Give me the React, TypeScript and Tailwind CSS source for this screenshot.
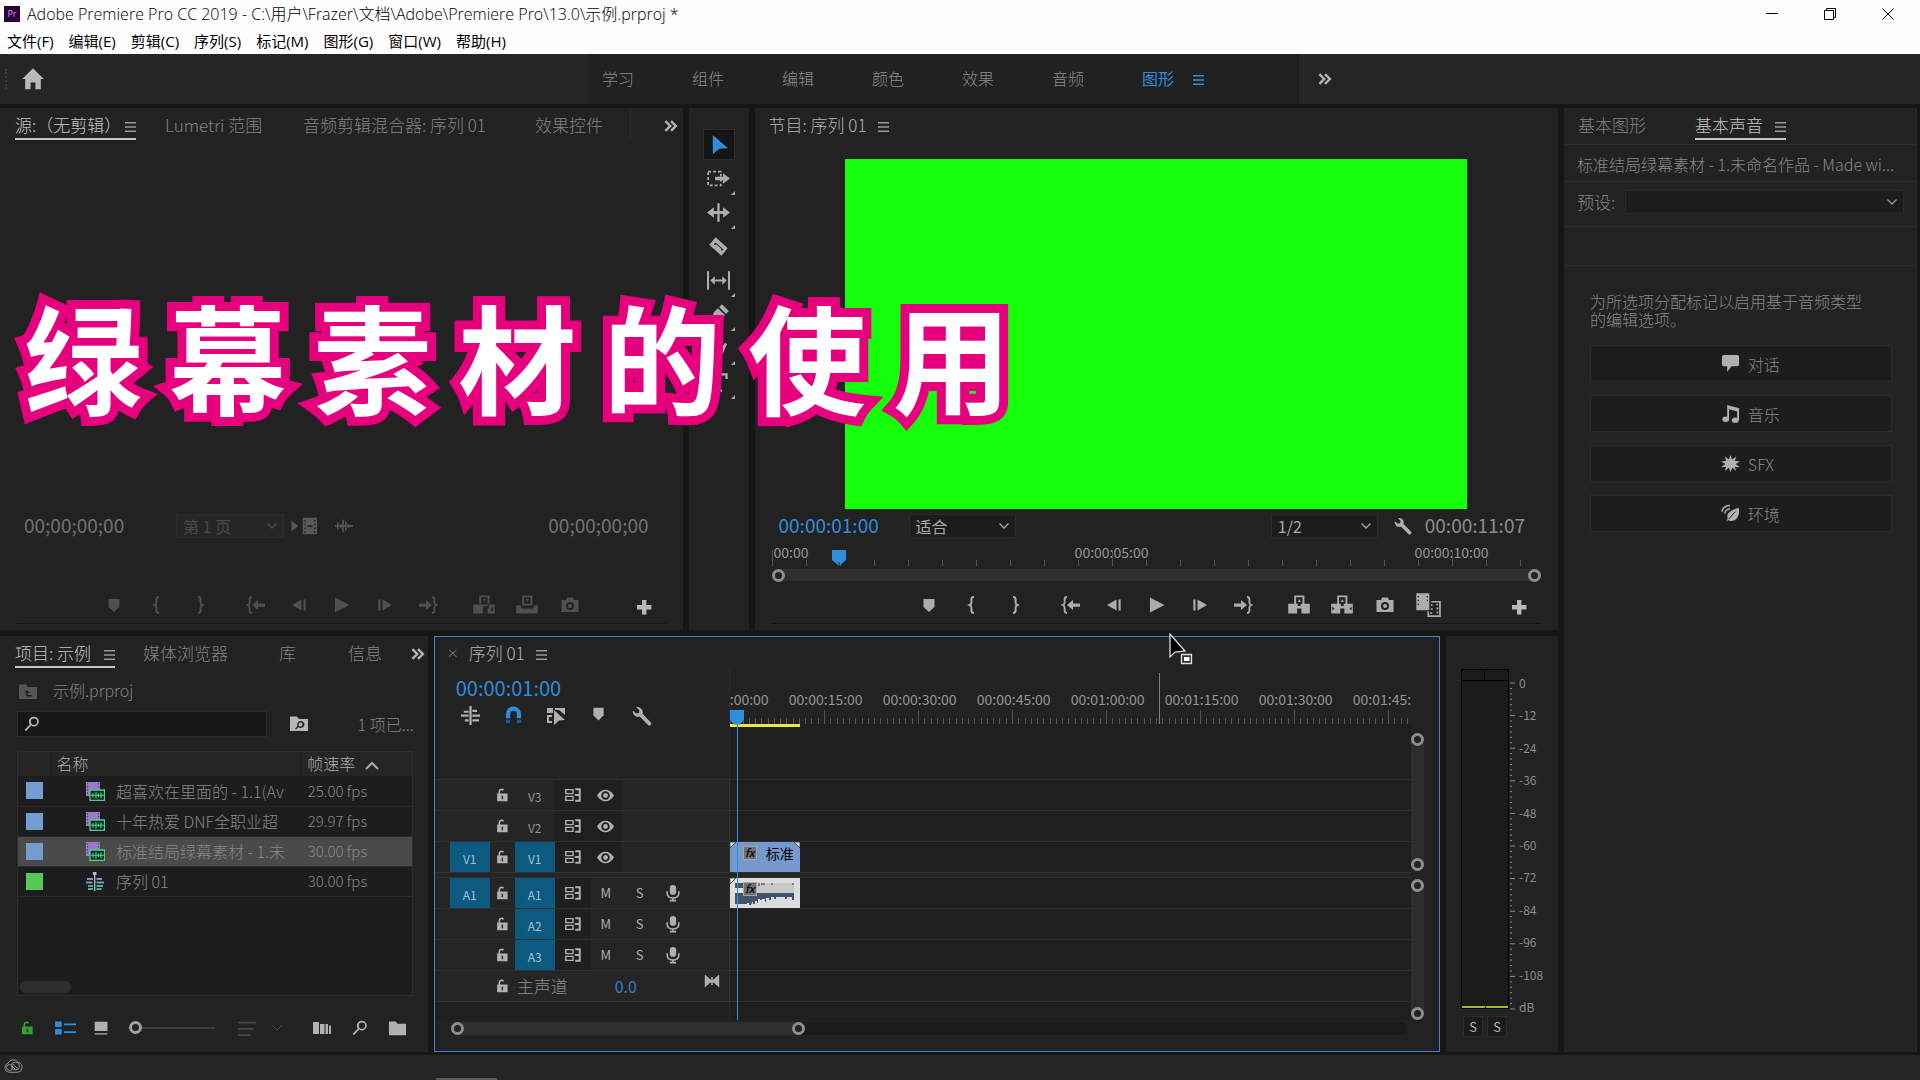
import { ReactNode } from 'react';
import { clsx } from 'clsx';

interface IconProps {
  children: ReactNode;
  className?: string;
  size?: number;
}

function Icon({ children, className, size = 20 }: IconProps) {
  return (
    <svg viewBox="0 0 20 20" width={size} height={size} className={clsx('shrink-0 fill-current', className)} aria-hidden="true">
      {children}
    </svg>
  );
}

const MarkerIcon = () => <Icon><path d="M4.500 4h11v8l-5.500 5-5.500-5z" /></Icon>;
const PlayIcon = () => <Icon><path d="M3 2.500 17.500 10 3 17.500z" /></Icon>;
const PlusIcon = () => <Icon><path d="M8 3h4.400v5h5v4.400h-5v5H8v-5H3V8h5z" /></Icon>;
const InIcon = () => (
  <Icon><path d="M12 2c-2.200 0-2.600.8-2.600 2.400v3c0 1.200-.6 2-1.900 2.600 1.300.6 1.900 1.400 1.900 2.600v3c0 1.600.4 2.400 2.600 2.400" fill="none" stroke="currentColor" strokeWidth="2" /></Icon>
);
const OutIcon = () => (
  <Icon><path d="M8 2c2.200 0 2.600.8 2.600 2.400v3c0 1.200.6 2 1.900 2.600-1.300.6-1.900 1.400-1.900 2.600v3c0 1.600-.4 2.400-2.600 2.400" fill="none" stroke="currentColor" strokeWidth="2" /></Icon>
);
const GoInIcon = () => (
  <Icon>
    <path d="M6 2C4 2 3.600 3 3.600 4.400v3c0 1.200-.6 2-1.900 2.600 1.300.6 1.900 1.400 1.900 2.600v3C3.600 17 4 18 6 18" fill="none" stroke="currentColor" strokeWidth="1.800" />
    <path d="M6 10l6-5v3.400h7v3.400h-7V15z" />
  </Icon>
);
const GoOutIcon = () => (
  <Icon>
    <path d="M14 2c2 0 2.400 1 2.400 2.400v3c0 1.200.6 2 1.900 2.600-1.300.6-1.900 1.400-1.900 2.600v3c0 1.400-.4 2.400-2.400 2.400" fill="none" stroke="currentColor" strokeWidth="1.800" />
    <path d="M14 10L8 5v3.400H1v3.400h7V15z" />
  </Icon>
);
const StepBackIcon = () => <Icon><path d="M3 10l9.500-5.500v11zM14.500 4.500h2.200v11h-2.200z" /></Icon>;
const StepForwardIcon = () => <Icon><path d="M17 10L7.500 4.500v11zM3.300 4.500h2.200v11H3.300z" /></Icon>;
const CameraIcon = () => (
  <Icon><path fillRule="evenodd" d="M1.500 5H6l1.200-2.500h5.600L14 5h4.500v12h-17zM10 7a4 4 0 100 8 4 4 0 000-8zm0 2a2 2 0 110 4 2 2 0 010-4z" /></Icon>
);
const LiftIcon = () => (
  <Icon size={24}>
    <path d="M6 2h8.500v7h-1.600V3.500H7.600V9H6zM9 7.500 10.300 5l1.300 2.500zM1 9h8v1.800h2.400V9H19v8h-7v-4h-3.500v4H1z" />
  </Icon>
);
const ExtractIcon = () => (
  <Icon size={24}>
    <path fillRule="evenodd" d="M6 2h8.500v7h-1.600V3.500H7.600V9H6zM9 7.500 10.300 5l1.300 2.500zM1 9h8v1.800h2.400V9H19v8h-7v-4h-3.500v4H1zM2 11.500v3L3.800 13zm16 0L16.200 13l1.800 1.500z" />
  </Icon>
);
const InsertIcon = () => (
  <Icon size={24}>
    <path fillRule="evenodd" d="M6 2h8.500v7h-1.600V3.500H7.600V9H6zM9 5l1.300 2.500L11.600 5zM1 9.500h12V11H9v6H1zM14 9.500h5v7.500h-6v-4h1zm2 2.500v3h1.500v-3z" />
  </Icon>
);
const OverwriteIcon = () => (
  <Icon size={24}>
    <path d="M6 2h8.500v8.500H6zm1.600 1.500V9h5.300V3.500zM9 5l1.300 2.500L11.600 5zM1 10.500h4V13h10.500v-2.500H19V17H1z" fillRule="evenodd" />
  </Icon>
);
const CompareIcon = () => (
  <Icon size={26}>
    <path fillRule="evenodd" d="M1 1h10v13H1zM2 3v1h1V3zm0 3v1h1V6zm0 3v1h1V9zm7-6v1h1V3zm0 3v1h1V6z" />
    <path d="M12.500 7.500h6.700v11h-9V15" fill="none" stroke="currentColor" strokeWidth="1.300" />
    <path d="M16.500 9h1.400v1.400h-1.400zm0 3h1.400v1.400h-1.400zm0 3h1.400v1.400h-1.400zM11.800 15.500h1.400v1.400h-1.400zM12.200 9.500h1.300v1.300h-1.300zm0 3h1.300v1.300h-1.300z" />
  </Icon>
);
const WrenchIcon = ({ size = 20 }: { size?: number }) => (
  <Icon size={size}>
    <path d="M4.200 1.200a5.200 5.200 0 016.300 6.600l8.200 8.400a1.900 1.900 0 01-2.700 2.700L7.700 10.600A5.200 5.200 0 01.9 4.600l3.400 3 2.600-.7.500-2.600z" />
  </Icon>
);
const SearchIcon = ({ className }: { className?: string }) => (
  <Icon size={16} className={className}>
    <path d="M12.500 1a6 6 0 11-3.600 10.800L2.500 19 .8 17.300l6.500-6.800A6 6 0 0112.500 1zm0 2.200a3.900 3.900 0 100 7.800 3.900 3.900 0 000-7.800z" fillRule="evenodd" />
  </Icon>
);
const LockIcon = () => (
  <Icon size={14}>
    <path fillRule="evenodd" d="M3 8h2V5.500a4.500 4.500 0 018-3l-1.500 1.600A2.300 2.300 0 007.300 5.500V8H18v11H3zm6.500 3v5h2v-5z" />
  </Icon>
);
const SyncIcon = () => (
  <Icon size={18}>
    <path d="M2 4h8v4.500H2zM2 11.500h8V16H2z" fill="none" stroke="currentColor" strokeWidth="1.600" />
    <path d="M12.500 3.500h5v13h-5M17 10h-5" fill="none" stroke="currentColor" strokeWidth="2.200" />
  </Icon>
);
const EyeIcon = () => (
  <Icon size={17}>
    <path fillRule="evenodd" d="M0 10c5-9 15-9 20 0-5 9-15 9-20 0zm10-5a5 5 0 100 10 5 5 0 000-10z" />
    <circle cx="10" cy="10" r="2.800" />
  </Icon>
);
const MicIcon = () => (
  <Icon size={18}>
    <rect x="6.500" y="1" width="7" height="11" rx="3.500" />
    <path d="M3.500 8v2c0 7.500 13 7.500 13 0V8M10 15.500V19M6.500 18.500h7" fill="none" stroke="currentColor" strokeWidth="1.800" />
  </Icon>
);
const FolderIcon = () => <Icon size={19}><path d="M1 2.500h7l2 2.500h9v12H1z" /></Icon>;
const ChevronsIcon = () => (
  <Icon size={16}><path d="M3 4l6 6-6 6M10 4l6 6-6 6" fill="none" stroke="currentColor" strokeWidth="3" /></Icon>
);

function MenuLines({ className }: { className?: string }) {
  return (
    <svg viewBox="0 0 11 10" className={clsx('h-[10px] w-[11px] shrink-0 fill-current', className)} aria-hidden="true">
      <path d="M0 0h11v1.500H0zM0 4.200h11v1.500H0zM0 8.400h11V10H0z" />
    </svg>
  );
}

function TitleBar() {
  return (
    <header className="bg-[#fdfdfd] font-['Open_Sans','Noto_Sans_CJK_SC',sans-serif] font-normal text-black">
      <div className="flex h-7 items-center pl-1">
        <span className="flex size-4 items-center justify-center bg-[#2a0634] text-[9px] text-[#d893f2]">Pr</span>
        <h1 className="ml-[7px] text-[16px] leading-6 font-light whitespace-nowrap">
          Adobe Premiere Pro CC 2019 - C:\用户\Frazer\文档\Adobe\Premiere Pro\13.0\示例.prproj *
        </h1>
        <div className="mr-[3px] ml-auto flex">
          <button aria-label="最小化" className="flex h-7 w-[58px] items-center justify-center">
            <svg viewBox="0 0 12 12" className="size-3" stroke="black"><path d="M0 5.500h12" /></svg>
          </button>
          <button aria-label="还原" className="flex h-7 w-[58px] items-center justify-center">
            <svg viewBox="0 0 12 12" className="size-3" fill="none" stroke="black"><path d="M.5 2.500h9v9h-9zM2.500 2.500v-2h9v9h-2" /></svg>
          </button>
          <button aria-label="关闭" className="flex h-7 w-[58px] items-center justify-center">
            <svg viewBox="0 0 12 12" className="size-3" stroke="black"><path d="M.5.5l11 11M11.500.5l-11 11" /></svg>
          </button>
        </div>
      </div>
      <nav className="flex h-[26px] gap-[15px] pl-[7px] text-[15px] leading-[26px] whitespace-nowrap">
        {['文件(F)', '编辑(E)', '剪辑(C)', '序列(S)', '标记(M)', '图形(G)', '窗口(W)', '帮助(H)'].map(item => (
          <button key={item}>{item}</button>
        ))}
      </nav>
    </header>
  );
}

function WorkspaceBar() {
  return (
    <div className="flex h-[50px] items-center bg-[#252525] text-[16px] text-[#8c8c8c]">
      <div className="flex w-[588px] shrink items-center">
        <span className="ml-[5px] h-5 border-l-2 border-dotted border-[#3c3c3c]" />
        <button aria-label="主页" className="ml-[14px] text-[#b8b8b8]">
          <Icon size={24}><path d="M10 1l9 9h-2.500v8.500H12V13H8v5.500H3.500V10H1z" /></Icon>
        </button>
      </div>
      <nav className="flex h-full items-center bg-[#212121] pb-[3px] pl-[14px]">
        {['学习', '组件', '编辑', '颜色', '效果', '音频'].map(item => (
          <button key={item} className="w-[90px] text-left">{item}</button>
        ))}
        <button className="flex w-[156px] items-center gap-[19px] font-normal text-[#2f8ddb]">
          图形
          <MenuLines className="mt-[5px]" />
        </button>
      </nav>
      <button aria-label="更多工作区" className="flex h-full w-[52px] items-center justify-center border-l border-[#171717] text-[#b5b5b5]">
        <ChevronsIcon />
      </button>
    </div>
  );
}

function Tab({ children, active, className }: { children: ReactNode; active?: boolean; className?: string }) {
  return (
    <button
      className={clsx(
        'flex h-8 shrink-0 items-center border-b-2 pt-[3px] text-[17px] leading-5 whitespace-nowrap',
        active ? 'text-[#c4c4c4]' : 'border-transparent text-[#838383]',
        className,
      )}
    >
      {children}
      {active && <MenuLines className="mt-1 ml-auto text-[#9a9a9a]" />}
    </button>
  );
}

interface DropDownProps {
  label: string;
  value: string;
  className?: string;
}

function DropDown({ label, value, className }: DropDownProps) {
  return (
    <span className={clsx('relative block h-6 shrink-0 border border-[#2b2b2b]', className)}>
      <select aria-label={label} className="block h-full w-full appearance-none pl-[6px] text-[16px] leading-5 outline-none">
        <option>{value}</option>
      </select>
      <svg viewBox="0 0 10 6" className="pointer-events-none absolute top-2 right-[6px] h-[6px] w-[10px]" fill="none" stroke="currentColor" strokeWidth="1.300">
        <path d="M.5.5L5 5 9.500.5" />
      </svg>
    </span>
  );
}

interface TransportButton {
  label: string;
  icon: ReactNode;
  gap?: boolean;
}

const basicTransport: TransportButton[] = [
  { label: '添加标记', icon: <MarkerIcon /> },
  { label: '标记入点', icon: <InIcon /> },
  { label: '标记出点', icon: <OutIcon /> },
  { label: '转到入点', icon: <GoInIcon />, gap: true },
  { label: '后退一帧', icon: <StepBackIcon /> },
  { label: '播放', icon: <PlayIcon /> },
  { label: '前进一帧', icon: <StepForwardIcon /> },
  { label: '转到出点', icon: <GoOutIcon /> },
];

const sourceTransport: TransportButton[] = [
  ...basicTransport,
  { label: '插入', icon: <InsertIcon />, gap: true },
  { label: '覆盖', icon: <OverwriteIcon /> },
  { label: '导出帧', icon: <CameraIcon /> },
];

const programTransport: TransportButton[] = [
  ...basicTransport,
  { label: '提升', icon: <LiftIcon />, gap: true },
  { label: '提取', icon: <ExtractIcon /> },
  { label: '导出帧', icon: <CameraIcon /> },
  { label: '比较视图', icon: <CompareIcon /> },
];

function Transport({ buttons, className }: { buttons: TransportButton[]; className?: string }) {
  return (
    <div className={clsx('mx-[17px] flex h-[43px] shrink-0 items-center border-b border-[#151515] pt-[6px]', className)}>
      {buttons.map(b => (
        <button key={b.label} aria-label={b.label} className={clsx('flex w-[43px] justify-center', b.gap && 'ml-[13px]')}>
          {b.icon}
        </button>
      ))}
      <button aria-label="按钮编辑器" className="ml-auto flex w-11 justify-center pt-1 text-[#b8b8b8]"><PlusIcon /></button>
    </div>
  );
}

function SourcePanel() {
  return (
    <section className="flex min-h-0 min-w-0 flex-col bg-[#222] pb-[6px]">
      <div className="flex overflow-hidden pl-[15px]">
        <Tab active className="w-[121px]">源:（无剪辑）</Tab>
        <Tab className="ml-[29px] w-[138px]">Lumetri 范围</Tab>
        <Tab className="w-[232px]">音频剪辑混合器: 序列 01</Tab>
        <Tab>效果控件</Tab>
        <button aria-label="更多面板" className="ml-auto border-l border-[#2b2b2b] pt-[3px] pr-1 pl-8 text-[#b5b5b5]"><ChevronsIcon /></button>
      </div>
      <div className="flex-1" />
      <div className="mb-[39px] flex h-[33px] shrink-0 items-center px-6 text-[19px] font-normal text-[#727272]">
        <span className="w-[152px]">00;00;00;00</span>
        <DropDown label="源页码" value="第 1 页" className="w-[108px] bg-[#262626] text-[#4a4a4a]" />
        <Icon size={30} className="ml-[6px] text-[#585858]">
          <path d="M1 6.500l4.500 3.500L1 13.500z" />
          <path fillRule="evenodd" d="M8.500 4.500h9.500v11H8.500zM9.500 6v1h1V6zm0 2.500v1h1v-1zm0 2.500v1h1v-1zm0 2.500v1h1v-1zM16 6v1h1V6zm0 2.500v1h1v-1zm0 2.500v1h1v-1zm0 2.500v1h1v-1zm-4.400-4v1.200h3.400V9.500z" />
        </Icon>
        <Icon size={18} className="ml-[15px] text-[#585858]">
          <path d="M0 10h20M3 6v8M6.500 8v4M9 3v14M12 5v10M15 8v4M17.500 9v2" stroke="currentColor" strokeWidth="1.600" />
        </Icon>
        <span className="mr-[10px] ml-auto">00;00;00;00</span>
      </div>
      <Transport buttons={sourceTransport} className="pl-[75px] text-[#4f4f4f]" />
    </section>
  );
}

const tools: { label: string; icon: ReactNode; corner?: boolean }[] = [
  { label: '选择工具', icon: <path d="M4 0l16 14-9 .5L4 20z" /> },
  {
    label: '向前选择轨道工具',
    corner: true,
    icon: <><path d="M1 4h11v12H1z" fill="none" stroke="currentColor" strokeWidth="1.500" strokeDasharray="2.500 1.800" /><path d="M7 8.500h7V5.500l6 4.500-6 4.500v-3H7z" /></>,
  },
  { label: '波纹编辑工具', corner: true, icon: <path d="M9 2h2v6.800h3V5.500l6 4.500-6 4.500v-3.200h-3V18H9v-6.700H6v3.200L0 10l6-4.500v3.300h3z" /> },
  { label: '剃刀工具', icon: <path fillRule="evenodd" d="M7.500 2l10.500 9.500-5.500 6.500L2 8.500zM6 8l1 1 1-1 4.500 4-.5 1 1 .8 1.300-1.300-6.800-6z" /> },
  { label: '外滑工具', corner: true, icon: <path d="M0 2h1.800v16H0zM18.200 2H20v16h-1.800zM2.800 10l4-3.800v3h6.400v-3l4 3.800-4 3.800v-3H6.800v3z" /> },
  { label: '钢笔工具', corner: true, icon: <path d="M13 1l6 6-2.500 2.500-6-6zM9.500 4.500l6 6-3 5L2 19l4-11z" /> },
  { label: '手形工具', corner: true, icon: <path d="M4 4l2-.5 2 6V2h2v7l1.500-6.500 2 .5-1 7 3-5 2 1-4 9-3 4H6l-5-7 1.500-1.200L6 12z" /> },
  { label: '文字工具', corner: true, icon: <path d="M2 2h16v5h-2V4h-5v12h2v2H7v-2h2V4H4v3H2z" /> },
];

function ToolsPanel() {
  return (
    <section className="flex flex-col items-center bg-[#222] pt-[19px]">
      {tools.map((tool, i) => (
        <button key={tool.label} aria-label={tool.label} className="relative flex h-[34px] w-8 items-center justify-center text-[#adadad]">
          <span className={clsx('flex h-[31px] w-8 items-center justify-center', i === 0 && 'border border-[#2c2c2c] bg-[#151515] text-[#2f8ddb]')}>
            <Icon size={i === 0 ? 19 : 23}>{tool.icon}</Icon>
          </span>
          {tool.corner && <Icon size={4} className="absolute right-0 bottom-0"><path d="M20 0v20H0z" /></Icon>}
        </button>
      ))}
    </section>
  );
}

interface RulerProps {
  labels: string[];
  step: number;
  divisions: number;
  count: number;
  labelClass: string;
  tickClass?: string;
}

// every label is centred on its own major tick, the first one runs off the left edge
function Ruler({ labels, step, divisions, count, labelClass, tickClass }: RulerProps) {
  return (
    <div className="overflow-hidden">
      <div className="flex text-[14px] leading-5 font-normal text-[#959595]">
        {labels.map(label => (
          <span key={label} className={clsx('shrink-0 text-center', labelClass)}>{label}</span>
        ))}
      </div>
      <svg className={clsx('block h-[14px] w-full overflow-hidden', tickClass)} stroke="#555">
        {Array.from({ length: count }, (_, i) => {
          const x = Math.round((i * step) / divisions) + 0.5;
          return <line key={i} x1={x} x2={x} y1={i % divisions === 0 ? 0 : 8} y2={14} />;
        })}
      </svg>
    </div>
  );
}

const Knob = () => <span className="block size-[13px] shrink-0 rounded-full border-[3px] border-[#8e8e8e] bg-[#222]" />;

function ProgramPanel() {
  return (
    <section className="flex min-h-0 min-w-0 flex-col bg-[#222] pb-[6px]">
      <div className="flex pl-[14px]">
        <button className="flex h-8 items-center gap-[11px] pt-[2px] text-[17px] leading-5 text-[#b4b4b4]">
          节目: 序列 01 <MenuLines className="mt-1 text-[#9a9a9a]" />
        </button>
      </div>
      <div className="flex min-h-0 flex-1 justify-center pt-[19px]">
        <div className="aspect-video h-full bg-[#14ff09]" />
      </div>
      <div className="flex h-[33px] shrink-0 items-center pr-[33px] pl-6 text-[19px] font-normal">
        <span className="w-[130px] text-[#2f8ddb]">00:00:01:00</span>
        <DropDown label="选择缩放级别" value="适合" className="w-[107px] bg-[#1d1d1d] text-[#a8a8a8]" />
        <DropDown label="选择回放分辨率" value="1/2" className="ml-auto w-[107px] bg-[#1d1d1d] text-[#a8a8a8]" />
        <button aria-label="设置" className="mr-[13px] ml-4 text-[#b0b0b0]"><WrenchIcon size={18} /></button>
        <span className="text-[#8d8d8d]">00:00:11:07</span>
      </div>
      <div className="relative mx-[17px] h-6 shrink-0">
        <Ruler
          labels={['00:00:00:00', '00:00:05:00', '00:00:10:00']}
          step={340}
          divisions={10}
          count={23}
          labelClass="w-[340px] first:-ml-[170px]"
          tickClass="-mt-[10px]"
        />
        <svg viewBox="0 0 14 16" className="absolute bottom-0 left-[60px] h-4 w-[14px]"><path d="M0 0h14v10l-7 6-7-6z" fill="#2f8ddb" /><path d="M7 12v4" stroke="#0d3252" /></svg>
      </div>
      <div className="mx-[17px] mt-[3px] flex h-3 shrink-0 items-center justify-between rounded-full bg-[#2f2f2f]">
        <Knob />
        <Knob />
      </div>
      <Transport buttons={programTransport} className="pl-[136px] text-[#acacac]" />
    </section>
  );
}

const audioTypes = [
  { label: '对话', icon: <path d="M3 1h14q2 0 2 2v8q0 2-2 2h-6l-4.500 6v-6H3q-2 0-2-2V3q0-2 2-2z" /> },
  {
    label: '音乐',
    icon: <><ellipse cx="5" cy="16" rx="3.600" ry="2.900" /><ellipse cx="15" cy="17" rx="3.600" ry="2.800" /><path d="M6.500 1L19 4.500V17h-2V8L8.500 5.500V16h-2z" /></>,
  },
  { label: 'SFX', icon: <path d="M10 1l1.600 4.800L16 2.500 14.500 7 20 8l-4.500 2.500L20 14l-5.500-.5L16 18l-4-3.500L10 19l-1.800-4.500L4 18l1.500-4.500L0 14l4.500-3.500L0 8l5.500-1L4 2.500l4.400 3.300z" /> },
  {
    label: '环境',
    icon: <><path d="M18.500 4c2 7-1.500 14-7.500 14-1.500 0-2.500-.4-3.500-1.200L5.500 19 7 15c-2-6 5-9 11.500-11z" /><path d="M8 16l7-8" stroke="#1d1d1d" /><path d="M1 8C2 3.500 5 1.500 9.500 1.500M4 10c.5-3 2.500-4.500 5.500-5" fill="none" stroke="currentColor" strokeWidth="1.600" /></>,
  },
];

function SoundPanel() {
  return (
    <aside className="flex min-h-0 flex-col border-r border-[#2a2a2a] bg-[#222] text-[#878787]">
      <div className="flex h-[37px] shrink-0 border-b border-[#2d2d2d] pl-[14px]">
        <Tab className="w-[117px]">基本图形</Tab>
        <Tab active className="w-[91px]">基本声音</Tab>
      </div>
      <p className="h-[37px] shrink-0 overflow-hidden border-b border-[#2d2d2d] pl-[13px] text-[16px] leading-[39px] whitespace-nowrap">
        标准结局绿幕素材 - 1.未命名作品 - Made wi...
      </p>
      <div className="flex h-[45px] shrink-0 items-center border-b border-[#2d2d2d] pr-[12px] pb-1 pl-[13px]">
        <span className="w-12 text-[17px]">预设:</span>
        <DropDown label="预设" value="" className="flex-1 bg-[#1d1d1d] text-[#999]" />
      </div>
      <div className="h-[39px] shrink-0 border-b border-[#2d2d2d]" />
      <p className="mt-[26px] mr-[50px] ml-[26px] text-[16px] leading-[18px]">为所选项分配标记以启用基于音频类型的编辑选项。</p>
      <div className="mt-[17px] mr-[24px] ml-[26px] flex flex-col gap-[13px]">
        {audioTypes.map(type => (
          <button key={type.label} className="flex h-[37px] items-center gap-2 border border-[#2b2b2b] bg-[#1d1d1d] pl-[43%] text-[16px] leading-5">
            <Icon size={19} className="text-[#b0b0b0]">{type.icon}</Icon>
            {type.label}
          </button>
        ))}
      </div>
    </aside>
  );
}

const clips = [
  { name: '超喜欢在里面的 - 1.1(Av', fps: '25.00 fps', color: 'bg-[#739dd0]' },
  { name: '十年热爱 DNF全职业超', fps: '29.97 fps', color: 'bg-[#739dd0]' },
  { name: '标准结局绿幕素材 - 1.未', fps: '30.00 fps', color: 'bg-[#739dd0]', selected: true },
  { name: '序列 01', fps: '30.00 fps', color: 'bg-[#57c957]', sequence: true },
];

const ClipIcon = () => (
  <svg viewBox="0 0 20 20" className="size-5 shrink-0" aria-hidden="true">
    <path d="M1 1h14v14H1z" fill="#9a7bc9" />
    <path d="M2.500 2v12M13.500 2v6" stroke="#5b4486" strokeWidth="1.200" strokeDasharray="1.500 1.500" />
    <path d="M5 9h14.500v10.500H5z" fill="#123022" stroke="#4dd092" strokeWidth="1.300" />
    <path d="M6 14.200h13M8 12v4.500M11 11v6.500M13.500 12.500v3.500M16 11.500v5.500" stroke="#4dd092" strokeWidth="1.100" />
  </svg>
);

const SequenceIcon = () => (
  <svg viewBox="0 0 20 20" className="size-5 shrink-0" aria-hidden="true">
    <path d="M2 8h6M11.500 8H17M1 11.500h6.500M11.500 11.500H19" stroke="#7b97c4" strokeWidth="2" />
    <path d="M3 15h5M11.500 15H18M3 18h5M11.500 18h5" stroke="#3fb38a" strokeWidth="2" />
    <path d="M9.700 3v17" stroke="#bbb" strokeWidth="1.300" />
    <path d="M8 1h3.500v3H8z" fill="#bbb" />
  </svg>
);

function ProjectPanel() {
  return (
    <section className="flex min-h-0 min-w-0 flex-col bg-[#222]">
      <div className="flex shrink-0 overflow-hidden pl-[15px]">
        <Tab active className="w-[100px]">项目: 示例</Tab>
        <Tab className="ml-7 w-[136px]">媒体浏览器</Tab>
        <Tab className="w-[69px]">库</Tab>
        <Tab>信息</Tab>
        <button aria-label="更多面板" className="mr-[2px] ml-auto pt-[3px] text-[#b5b5b5]"><ChevronsIcon /></button>
      </div>
      <div className="mt-[10px] flex h-6 shrink-0 items-center gap-[15px] pl-[18px] text-[16px] text-[#838383]">
        <Icon size={20} className="mt-1 text-[#555]"><path fillRule="evenodd" d="M1 2.500h7l2 2.500h9v12H1zM9 8l-3 3h2.200v3.500h6V13H9.800v-2H12z" /></Icon>
        示例.prproj
      </div>
      <div className="mt-[9px] flex h-[26px] shrink-0 items-center pr-[14px] pl-[17px] text-[16px] text-[#838383]">
        <label className="flex h-full w-[250px] shrink-0 items-center border border-[#2b2b2b] bg-[#161616] pl-[6px]">
          <SearchIcon className="text-[#b5b5b5]" />
          <input aria-label="搜索" className="w-full bg-transparent px-2 outline-none" />
        </label>
        <button aria-label="查找素材箱" className="ml-[22px] text-[#b5b5b5]">
          <Icon size={20}><path fillRule="evenodd" d="M1 2.500h7l2 2.500h9v12H1zM11.500 7a3.500 3.500 0 00-3 5L6 14.500l1 1L9.500 13a3.500 3.500 0 102-6zm0 1.500a2 2 0 110 4 2 2 0 010-4z" /></Icon>
        </button>
        <span className="ml-auto whitespace-nowrap">1 项已...</span>
      </div>
      <div className="mt-[14px] mr-[15px] ml-[17px] flex min-h-0 flex-1 flex-col border border-[#2d2d2d] bg-[#1d1d1d]">
        <table className="w-full table-fixed border-collapse text-left text-[16px] text-[#878787]">
          <thead>
            <tr className="h-6 bg-[#252525] text-[#adadad]">
              <th aria-label="标签" className="w-[33px]" />
              <th className="border-l border-[#1d1d1d] pb-[2px] pl-[5px] leading-5 font-light">名称</th>
              <th className="w-[111px] border-l border-[#1d1d1d] pb-[2px] pl-[6px] leading-5 font-light">
                <span className="flex items-center gap-[10px]">
                  帧速率
                  <svg viewBox="0 0 14 8" className="mt-[6px] h-2 w-[14px]" fill="none" stroke="currentColor" strokeWidth="2"><path d="M1 7l6-6 6 6" /></svg>
                </span>
              </th>
            </tr>
          </thead>
          <tbody>
            {clips.map(clip => (
              <tr key={clip.name} className={clsx('h-[30px] border-b border-[#292929]', clip.selected && 'bg-[#4a4a4a]')}>
                <td className="pl-2"><span className={clsx('block size-[17px]', clip.color)} /></td>
                <td className="overflow-hidden pl-[34px]">
                  <span className="flex h-7 items-center gap-[11px] overflow-hidden leading-5 whitespace-nowrap">
                    {clip.sequence ? <SequenceIcon /> : <ClipIcon />}
                    {clip.name}
                  </span>
                </td>
                <td className="pl-[7px] text-[15px] leading-5">{clip.fps}</td>
              </tr>
            ))}
          </tbody>
        </table>
        <span className="mt-auto mb-[2px] ml-[2px] h-3 w-[51px] rounded-full bg-[#2e2e2e]" />
      </div>
      <div className="flex h-14 shrink-0 items-center pt-2 pr-[21px] pl-5 text-[#b0b0b0]">
        <button aria-label="项目可写" className="text-[#2fa52f]"><LockIcon /></button>
        <button aria-label="列表视图" className="ml-5 text-[#2f8ddb]">
          <Icon size={22}><path d="M1 4h6v5H1zM1 11h6v5H1zM9 6h11v1.500H9zM9 13h11v1.500H9z" /></Icon>
        </button>
        <button aria-label="图标视图" className="ml-[17px]"><Icon size={17}><path d="M2 2h15v11H2zM2 15.500h15V17H2z" /></Icon></button>
        <input
          type="range"
          aria-label="图标大小"
          defaultValue={0}
          className="ml-[19px] w-[86px] appearance-none bg-transparent [&::-webkit-slider-runnable-track]:h-[2px] [&::-webkit-slider-runnable-track]:bg-[#3d3d3d] [&::-webkit-slider-thumb]:-mt-[6px] [&::-webkit-slider-thumb]:size-[13px] [&::-webkit-slider-thumb]:appearance-none [&::-webkit-slider-thumb]:rounded-full [&::-webkit-slider-thumb]:border-[3px] [&::-webkit-slider-thumb]:border-[#a0a0a0] [&::-webkit-slider-thumb]:bg-[#222]"
        />
        <button aria-label="排序图标" className="ml-[23px] flex items-center gap-4 text-[#484848]">
          <Icon size={18}><path d="M0 3h20v2H0zM0 10h17v2H0zM0 17h14v2H0z" /></Icon>
          <svg viewBox="0 0 10 6" className="h-[6px] w-[10px]" fill="none" stroke="currentColor"><path d="M.5.500L5 5 9.500.500" /></svg>
        </button>
        <button aria-label="自动匹配序列" className="ml-auto"><Icon><path d="M1 4h6v12H1zM8 6h4.500v10H8zM13.500 6H16v10h-2.500zM17 7.500h2V16h-2z" /></Icon></button>
        <button aria-label="查找" className="ml-5"><SearchIcon /></button>
        <button aria-label="新建素材箱" className="ml-5"><FolderIcon /></button>
      </div>
    </section>
  );
}

interface Track {
  name: string;
  audio?: boolean;
  source?: boolean;
  target?: boolean;
}

const videoTracks: Track[] = [{ name: 'V3' }, { name: 'V2' }, { name: 'V1', source: true, target: true }];
const audioTracks: Track[] = [
  { name: 'A1', audio: true, source: true, target: true },
  { name: 'A2', audio: true, target: true },
  { name: 'A3', audio: true, target: true },
];

const FxBadge = () => (
  <span className="relative block h-[14px] w-[14px] shrink-0 border border-[#a5a5a5] bg-[#707070] text-center text-[11px] leading-[11px] font-medium text-black italic">fx</span>
);

function VideoClip() {
  return (
    <div className="relative flex h-[30px] w-[70px] items-start gap-2 overflow-hidden bg-[#7599cc] pt-[4px] pl-[13px]">
      <FxBadge />
      <span className="pl-px text-[14px] leading-[14px] font-normal whitespace-nowrap text-black">标准</span>
      <svg viewBox="0 0 70 30" className="absolute inset-0 h-[30px] w-[70px]"><path d="M0 0h6L0 6zM70 0h-6l6 6z" fill="#dcdcdc" stroke="#222" strokeWidth=".7" /></svg>
    </div>
  );
}

function AudioClip() {
  return (
    <div className="relative h-[30px] w-[70px] bg-[#dcdcdc] pt-[4px] pl-[13px]">
      <svg viewBox="0 0 70 30" className="absolute inset-0 h-[30px] w-[70px]">
        <path d="M22 5h42v11H22z" fill="#c8c8ca" />
        <path d="M5 5h8v5H5zM5 15h59v7h-2v-3h-5v2h-2v-2h-9v2h-2v-2h-3v3h-2v-2h-3v4h-1v-3h-3v1h-2v-1h-2v4h-1v-2h-2v3h-2v-3l-2 4h-2v-2h-2v1H5z" fill="#42536e" />
        <path d="M29 5v3M32 5v2M34 5v2M42 5v2M63 5v2" stroke="#333" />
        <path d="M0 0h6L0 6z" fill="#eee" stroke="#222" strokeWidth=".7" />
      </svg>
      <FxBadge />
    </div>
  );
}

function TrackRow({ track }: { track: Track }) {
  const box = 'flex h-full w-10 shrink-0 items-center justify-center pt-[3px] text-[12px] font-normal';
  return (
    <div className="flex h-[31px] shrink-0 border-t border-[#303030]">
      <div className="flex w-[295px] shrink-0 items-center border-r border-[#303030] bg-[#252525] pl-[15px] text-[#b0b0b0]">
        {track.source ? <button className={clsx(box, 'bg-[#0d5a80] text-[#9fc3d6]')}>{track.name}</button> : <span className="w-10" />}
        <button aria-label={`切换轨道锁定 ${track.name}`} className="flex w-[25px] justify-center"><LockIcon /></button>
        <button className={clsx(box, track.target ? 'bg-[#0d5a80] text-[#9fc3d6]' : 'text-[#949494]')}>{track.name}</button>
        <button aria-label={`切换同步锁定 ${track.name}`} className="flex h-full w-9 items-center justify-center bg-[#1f1f1f]"><SyncIcon /></button>
        {track.audio ? (
          <>
            <button aria-label={`静音 ${track.name}`} className="w-[30px] text-center text-[13px] font-normal">M</button>
            <button aria-label={`独奏 ${track.name}`} className="w-[38px] text-center text-[13px] font-normal">S</button>
            <button aria-label={`画外音录制 ${track.name}`} className="flex w-7 justify-center"><MicIcon /></button>
          </>
        ) : (
          <button aria-label={`切换轨道输出 ${track.name}`} className="flex h-full w-[30px] items-center justify-center bg-[#1f1f1f]"><EyeIcon /></button>
        )}
      </div>
      <div className="flex-1">
        {track.name === 'V1' && <VideoClip />}
        {track.name === 'A1' && <AudioClip />}
      </div>
    </div>
  );
}

function Timeline() {
  return (
    <section className="flex min-h-0 min-w-0 flex-col border border-[#4b7fc4] bg-[#222]">
      <div className="flex h-8 shrink-0 items-center pl-3 text-[17px] leading-5 text-[#b4b4b4]">
        <button aria-label="关闭序列" className="text-[12px] text-[#999]">×</button>
        <span className="ml-[10px]">序列 01</span>
        <MenuLines className="mt-1 ml-[11px] text-[#9a9a9a]" />
      </div>
      <div className="flex min-h-0 flex-1 pr-[15px]">
        <div className="relative flex min-w-0 flex-1 flex-col bg-[#1f1f1f]">
          <div className="flex h-[110px] shrink-0">
            <div className="w-[295px] shrink-0 border-r border-[#2a2a2a] bg-[#222] pt-[3px]">
              <p className="pl-[21px] text-[20px] leading-8 font-normal text-[#2f8ddb]">00:00:01:00</p>
              <div className="flex pt-[2px] pl-[14px] text-[#b0b0b0]">
                <button aria-label="嵌套序列" className="flex w-[43px] justify-center">
                  <Icon size={19}><path d="M8.800 0h2.400v20H8.800zM3 5h5v2.200H3zM12 4h5v2.200h-5zM0 9h8v2.200H0zM12 9h8v2.200h-8zM4 14h4v2.200H4zM12 14h7v2.200h-7z" /></Icon>
                </button>
                <button aria-label="对齐" className="flex w-[43px] justify-center text-[#2f8ddb]">
                  <Icon size={19}><path d="M2 13V8.500a8 8 0 0116 0V13h-4.500V8.500a3.500 3.500 0 00-7 0V13z" /><path d="M2 14.500h4.500V18H2zM13.500 14.500H18V18h-4.500z" fill="#205a8a" /></Icon>
                </button>
                <button aria-label="链接选择项" className="flex w-[42px] justify-center">
                  <Icon size={20}><path d="M1 2h6v5H1zM9 2h10v7l-6-5H9zM1 9h5v2H3v4h3v2H1zM8 4l11 10-6 .5L8 19z" /></Icon>
                </button>
                <button aria-label="添加标记" className="flex w-[44px] justify-center"><Icon size={17}><path d="M4 2h12v9l-6 6-6-6z" /></Icon></button>
                <button aria-label="时间轴显示设置" className="flex w-[42px] justify-center"><WrenchIcon /></button>
              </div>
            </div>
            <div className="relative min-w-0 flex-1">
              <div className="h-[55px] bg-[#222] pt-[20px]">
                <Ruler
                  labels={['00:00:00:00', '00:00:15:00', '00:00:30:00', '00:00:45:00', '00:01:00:00', '00:01:15:00', '00:01:30:00', '00:01:45:00']}
                  step={94}
                  divisions={15}
                  count={109}
                  labelClass="w-[94px] first:-ml-[45px]"
                  tickClass="mt-px"
                />
              </div>
              <span className="block h-[3px] w-[70px] bg-[#e6ea42]" />
              <span className="absolute top-1 left-[429px] h-[51px] w-px bg-[#808080]" />
              <svg viewBox="0 0 14 15" className="absolute top-[41px] left-0 h-[15px] w-[14px]"><path d="M0 0h14v10l-4 4.500H4L0 10z" fill="#2f8ddb" /></svg>
            </div>
          </div>
          {videoTracks.map(track => <TrackRow key={track.name} track={track} />)}
          <div className="h-[5px] shrink-0 border-t border-[#303030] bg-[#252525]" />
          {audioTracks.map(track => <TrackRow key={track.name} track={track} />)}
          <div className="flex h-8 shrink-0 border-y border-[#303030]">
            <div className="flex w-[295px] shrink-0 items-center border-r border-[#303030] bg-[#252525] pl-[55px] text-[#b0b0b0]">
              <button aria-label="切换主声道锁定" className="flex w-[25px] justify-center"><LockIcon /></button>
              <span className="ml-[2px] w-[98px] text-[17px] leading-5 text-[#8c8c8c]">主声道</span>
              <button className="text-[16px] leading-5 font-normal text-[#2f7dc4]">0.0</button>
              <Icon size={16} className="mr-[9px] mb-[10px] ml-auto"><path d="M1 2l7 6h1V5h2v3h1l7-6v16l-7-6h-1v3H9v-3H8l-7 6z" /></Icon>
            </div>
          </div>
          <div className="flex-1"><div className="h-full w-[295px] border-r border-[#2a2a2a]" /></div>
          <span className="absolute top-[54px] bottom-0 left-[302px] w-px bg-[#2f8ddb]" />
        </div>
        <div className="flex w-[13px] flex-col pt-16">
          <div className="flex h-[138px] flex-col justify-between rounded-full bg-[#2d2d2d]"><Knob /><Knob /></div>
          <div className="mt-2 flex flex-1 flex-col justify-between rounded-full bg-[#2d2d2d]"><Knob /><Knob /></div>
        </div>
      </div>
      <div className="mt-[2px] mr-[31px] mb-4 ml-4 flex h-[13px] shrink-0 rounded-full bg-[#1b1b1b]">
        <div className="flex w-[37%] justify-between rounded-full bg-[#2f2f2f]"><Knob /><Knob /></div>
      </div>
    </section>
  );
}

function AudioMeters() {
  const levels = ['0', '-12', '-24', '-36', '-48', '-60', '-72', '-84', '-96', '-108', 'dB'];
  return (
    <section className="flex min-h-0 flex-col bg-[#222] pt-[33px] pb-[15px] pl-[15px] text-[#8d8d8d]">
      <div className="flex min-h-0 flex-1">
        <div className="flex w-12 flex-col border border-black bg-[#1b1b1b]">
          <div className="flex h-[11px] border-b border-black"><span className="w-1/2 border-r border-black" /></div>
          <div className="mt-auto flex h-[2px] gap-px"><span className="flex-1 bg-[#a9b63c]" /><span className="flex-1 bg-[#a9b63c]" /></div>
        </div>
        <svg className="mt-[14px] h-[326px] w-[6px] overflow-visible" stroke="#8a8a8a">
          {Array.from({ length: 61 }, (_, i) => (
            <line key={i} x1={1} x2={i % 6 === 0 ? 6 : 3} y1={`${(i * 100) / 60}%`} y2={`${(i * 100) / 60}%`} />
          ))}
        </svg>
        <ul className="mt-2 -mb-1 ml-1 flex flex-col justify-between text-[12px] leading-3 font-normal">
          {levels.map(level => <li key={level}>{level}</li>)}
        </ul>
      </div>
      <div className="mt-[7px] flex gap-1 pl-[2px] text-[13px] leading-4 font-normal text-[#b5b5b5]">
        <button aria-label="独奏左声道" className="h-[21px] w-5 border border-[#2c2c2c] bg-[#1b1b1b]">S</button>
        <button aria-label="独奏右声道" className="h-[21px] w-5 border border-[#2c2c2c] bg-[#1b1b1b]">S</button>
      </div>
    </section>
  );
}

function StatusBar() {
  return (
    <footer className="relative h-[25px] shrink-0 bg-[#252525] pt-1 pl-[3px] text-[#8f8f8f]">
      <svg viewBox="0 0 20 14" className="h-[14px] w-5" fill="none" stroke="currentColor" aria-hidden="true">
        <path d="M6 13.300h8.500A5 5 0 0015.500 3.500 6 6 0 005 4.200 4.700 4.700 0 006 13.300z" />
        <circle cx="6.500" cy="8.500" r="3" />
        <circle cx="12.500" cy="7" r="4" />
        <path d="M8.500 6.500l4 4M9.500 4.500l5 5" />
      </svg>
      <span className="absolute bottom-0 left-[436px] h-[2px] w-[61px] bg-[#5a5a5a]" />
    </footer>
  );
}

export default function App() {
  return (
    <div className="relative flex h-screen min-h-[900px] flex-col overflow-hidden bg-[#161616] font-['Noto_Sans_CJK_SC',sans-serif] font-light">
      <TitleBar />
      <WorkspaceBar />
      <main className="mt-1 mb-[3px] grid min-h-0 flex-1 grid-cols-[minmax(0,1fr)_353px] gap-[6px] pr-[3px]">
        <div className="grid min-h-0 grid-rows-[minmax(0,522fr)_minmax(0,416fr)] gap-[6px]">
          <div className="grid min-h-0 grid-cols-[minmax(0,683fr)_60px_minmax(0,804fr)] gap-[6px]">
            <SourcePanel />
            <ToolsPanel />
            <ProgramPanel />
          </div>
          <div className="grid min-h-0 grid-cols-[minmax(0,428fr)_minmax(0,1007fr)_112px] gap-[6px]">
            <ProjectPanel />
            <Timeline />
            <AudioMeters />
          </div>
        </div>
        <SoundPanel />
      </main>
      <StatusBar />
      <p className="pointer-events-none absolute top-[285px] left-6 text-[118px] leading-[140px] font-bold whitespace-nowrap text-white [-webkit-text-stroke:18px_#e6007e] [paint-order:stroke_fill]">
        绿 幕 素 材 的 使 用
      </p>
      <svg viewBox="0 0 26 32" className="pointer-events-none absolute top-[633px] left-[1168px] h-8 w-[26px]" aria-hidden="true">
        <path d="M2 1v23l5-5 10-1z" fill="#000" stroke="#ddd" strokeWidth="1.300" />
        <path d="M13.500 21.500h10v9h-10z" fill="#333" stroke="#ddd" strokeWidth="1.300" />
        <path d="M16 24h5.500v4H16z" fill="#fff" />
      </svg>
    </div>
  );
}
